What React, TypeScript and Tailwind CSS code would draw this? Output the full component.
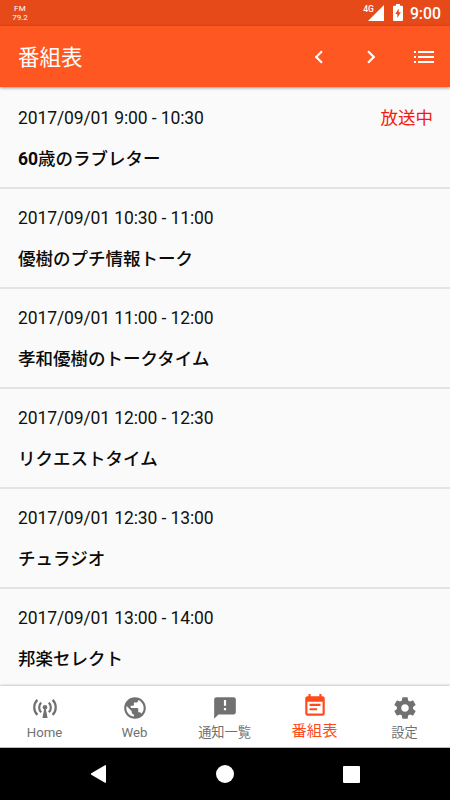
import type { ReactNode } from "react";

type Program = {
  time: string;
  prefix?: string;
  title: string;
  onAir?: boolean;
};

const programs: Program[] = [
  { time: "2017/09/01 9:00 - 10:30", prefix: "60", title: "歳のラブレター", onAir: true },
  { time: "2017/09/01 10:30 - 11:00", title: "優樹のプチ情報トーク" },
  { time: "2017/09/01 11:00 - 12:00", title: "孝和優樹のトークタイム" },
  { time: "2017/09/01 12:00 - 12:30", title: "リクエストタイム" },
  { time: "2017/09/01 12:30 - 13:00", title: "チュラジオ" },
  { time: "2017/09/01 13:00 - 14:00", title: "邦楽セレクト" },
];

function Icon({ d }: { d: string }) {
  return (
    <svg viewBox="0 0 24 24" className="size-[26px] shrink-0" fill="currentColor">
      <path d={d} />
    </svg>
  );
}

function AntennaIcon() {
  return (
    <svg viewBox="0 0 26 26" className="size-[26px] shrink-0" fill="none" stroke="currentColor" strokeWidth="2.2">
      <path d="M5.4 4.9a10.500 10.500 0 0 0 0 15M20.600 4.900a10.500 10.500 0 0 1 0 15M9.200 7.600a6.700 6.700 0 0 0 0 9.600M16.800 7.600a6.700 6.700 0 0 1 0 9.600" />
      <circle cx="13" cy="12.300" r="2.300" fill="currentColor" stroke="none" />
      <path d="M12.400 13h1.200l2 10h-5.200z" fill="currentColor" stroke="none" />
    </svg>
  );
}

function StatusBar() {
  return (
    <div className="flex h-[26px] shrink-0 items-center bg-[#e64a19] pr-[9px] pl-3 text-white">
      <div className="flex w-4 flex-col items-center text-[8px] leading-[9px]">
        <span className="tracking-[0.3px]">FM</span>
        <span>79.2</span>
      </div>
      <div className="ml-auto flex items-center">
        <span className="mb-2 text-[8.5px] leading-none font-medium">4G</span>
        <svg viewBox="0 0 16 16" className="-ml-[6px] size-4" fill="currentColor">
          <path d="M16 0v16H0z" />
        </svg>
        <svg viewBox="0 0 10 17" className="ml-[9px] h-[17px] w-[10px]">
          <path d="M3 0h4v1.700h2q1 0 1 1V16q0 1-1 1H1q-1 0-1-1V2.700q0-1 1-1h2z" fill="white" />
          <path d="M5.700 4.500L2.300 10h2v4l3.500-5.700h-2.100z" fill="#e64a19" />
        </svg>
        <span className="mt-[2px] ml-[7px] text-[15.8px] leading-none font-medium">9:00</span>
      </div>
    </div>
  );
}

function Header() {
  return (
    <header className="z-10 flex h-[61px] shrink-0 items-center bg-[#ff5722] pr-[13px] pl-[18px] text-white shadow-[0_1px_3px_rgba(0,0,0,0.4)]">
      <h1 className="flex-1 pt-[2px] text-[21.5px] leading-none">番組表</h1>
      <button className="mr-[26px]">
        <Icon d="M15.410 7.410L14 6l-6 6 6 6 1.410-1.410L10.830 12z" />
      </button>
      <button className="mr-[27px]">
        <Icon d="M10 6L8.590 7.410 13.170 12l-4.580 4.590L10 18l6-6z" />
      </button>
      <button>
        <svg viewBox="0 0 26 26" className="size-[26px]" fill="currentColor">
          <path d="M3 7h2v2H3zM3 12h2v2H3zM3 17h2v2H3zM7 7h16v2H7zM7 12h16v2H7zM7 17h16v2H7z" />
        </svg>
      </button>
    </header>
  );
}

function ProgramRow({ time, prefix, title, onAir }: Program) {
  return (
    <li className="h-[100px] border-b-2 border-[#e4e4e4] px-[18px] pt-[18px]">
      <div className="flex h-6 items-center justify-between text-[17.5px] leading-none text-[#111]">
        <span className="tracking-[-0.11px]">{time}</span>
        {onAir && <span className="-mr-px text-[#f51b0c]">放送中</span>}
      </div>
      <div className="mt-[17px] flex h-6 items-center text-[17.5px] leading-none font-medium text-[#0a0a0a]">
        {prefix && <span className="font-bold">{prefix}</span>}
        <span>{title}</span>
      </div>
    </li>
  );
}

function NavItem({ icon, label, active }: { icon: ReactNode; label: string; active?: boolean }) {
  return active ? (
    <button className="flex w-[90px] flex-col items-center pt-[7px] pr-px text-[#ff4a1c]">
      {icon}
      <span className="mt-[4px] text-[15.3px] leading-4">{label}</span>
    </button>
  ) : (
    <button className="flex w-[90px] flex-col items-center pt-[9px] pr-px text-[#717171]">
      {icon}
      <span className="mt-[4px] text-[13.2px] leading-4">{label}</span>
    </button>
  );
}

function BottomNav() {
  return (
    <nav className="z-10 flex h-[62px] shrink-0 border-b border-[#bbb] bg-white shadow-[0_-1px_2px_rgba(0,0,0,0.2)]">
      <NavItem label="Home" icon={<AntennaIcon />} />
      <NavItem
        label="Web"
        icon={
          <Icon d="M12 2C6.480 2 2 6.480 2 12s4.480 10 10 10 10-4.480 10-10S17.520 2 12 2zm-1 17.930c-3.950-.49-7-3.850-7-7.930 0-.62.08-1.210.21-1.790L9 15v1c0 1.100.9 2 2 2v1.930zm6.900-2.540c-.26-.81-1-1.390-1.900-1.390h-1v-3c0-.55-.45-1-1-1H8v-2h2c.55 0 1-.45 1-1V7h2c1.100 0 2-.9 2-2v-.41c2.930 1.190 5 4.060 5 7.410 0 2.080-.8 3.970-2.100 5.390z" />
        }
      />
      <NavItem
        label="通知一覧"
        icon={
          <Icon d="M20 2H4c-1.100 0-1.990.9-1.990 2L2 22l4-4h14c1.100 0 2-.9 2-2V4c0-1.100-.9-2-2-2zm-7 12h-2v-2h2v2zm0-4h-2V4.500h2V10z" />
        }
      />
      <NavItem
        active
        label="番組表"
        icon={
          <Icon d="M17 10H7v2h10v-2zm2-7h-1V1h-2v2H8V1H6v2H5c-1.110 0-1.990.9-1.990 2L3 19c0 1.100.89 2 2 2h14c1.100 0 2-.9 2-2V5c0-1.100-.9-2-2-2zm0 16H5V8h14v11zm-5-5H7v2h7v-2z" />
        }
      />
      <NavItem
        label="設定"
        icon={
          <Icon d="M19.430 12.980c.04-.32.07-.64.07-.98s-.03-.66-.07-.98l2.110-1.650c.19-.15.24-.42.12-.64l-2-3.460c-.12-.22-.39-.3-.61-.22l-2.490 1c-.52-.4-1.080-.73-1.690-.98l-.38-2.650C14.460 2.180 14.250 2 14 2h-4c-.25 0-.46.18-.49.42l-.38 2.650c-.61.25-1.170.59-1.690.98l-2.490-1c-.23-.09-.49 0-.61.22l-2 3.460c-.13.22-.07.49.12.64l2.110 1.650c-.04.32-.07.65-.07.98s.03.66.07.98l-2.110 1.650c-.19.15-.24.42-.12.64l2 3.460c.12.22.39.3.61.22l2.490-1c.52.4 1.080.73 1.690.98l.38 2.650c.03.24.24.42.49.42h4c.25 0 .46-.18.49-.42l.38-2.650c.61-.25 1.170-.59 1.690-.98l2.490 1c.23.09.49 0 .61-.22l2-3.460c.12-.22.07-.49-.12-.64l-2.110-1.650zM12 15.500c-1.930 0-3.500-1.570-3.500-3.500s1.570-3.500 3.500-3.500 3.500 1.570 3.500 3.500-1.570 3.500-3.500 3.500z" />
        }
      />
    </nav>
  );
}

function SystemBar() {
  return (
    <div className="flex h-[52px] shrink-0 items-center justify-between bg-black px-[90px] text-white">
      <svg viewBox="0 0 18 18" className="size-[18px]" fill="currentColor">
        <path d="M1.300 8.300L15 .2q1-.4 1 .7v16.200q0 1.100-1 .7L1.300 9.700q-1-.7 0-1.400z" />
      </svg>
      <div className="mr-[2px] size-[18px] rounded-full bg-white" />
      <div className="size-[17px] rounded-[1px] bg-white" />
    </div>
  );
}

export default function App() {
  return (
    <div className="flex h-[800px] w-[450px] flex-col overflow-hidden bg-[#fafafa] font-['Roboto','Noto_Sans_CJK_JP',sans-serif]">
      <StatusBar />
      <Header />
      <main className="min-h-0 flex-1 overflow-hidden">
        <ul className="pt-[2px]">
          {programs.map((p) => (
            <ProgramRow key={p.time} {...p} />
          ))}
        </ul>
      </main>
      <BottomNav />
      <SystemBar />
    </div>
  );
}
